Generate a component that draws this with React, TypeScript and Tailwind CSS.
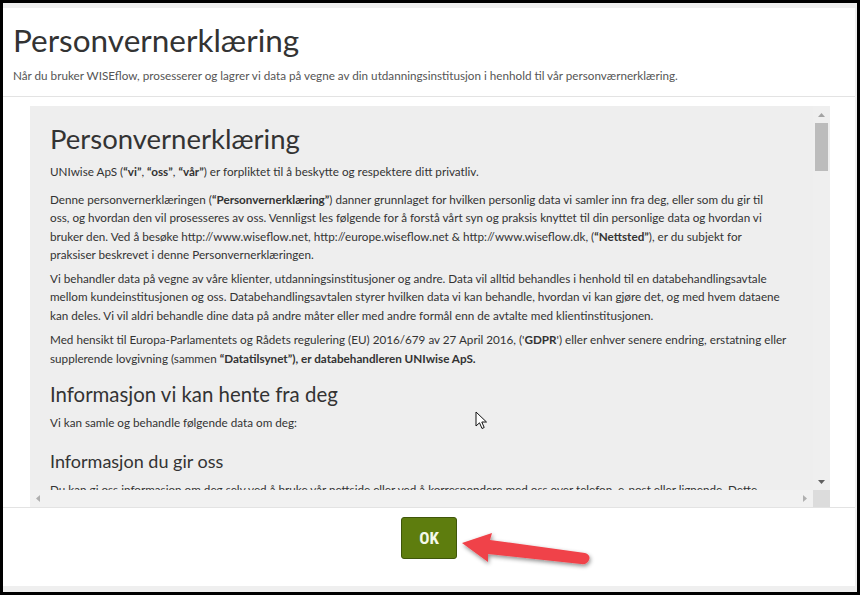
import React from "react";

const Line = ({ children }: { children: React.ReactNode }) => (
  <span className="block whitespace-nowrap">{children}</span>
);

export default function App() {
  return (
    <div className="w-[860px] h-[595px] bg-black p-[3px] font-['Lato',sans-serif] relative overflow-hidden">
      <div className="h-full bg-[#efefef] pt-[5px] pr-[2px] pb-[6px]">
        <div className="h-full bg-white flex flex-col">
          {/* Header */}
          <div className="h-[89px] border-b border-[#e3e3e3] px-[10px] pt-[15px] shrink-0">
            <h1 className="text-[31.5px] leading-[34px] text-[#333]">Personvernerklæring</h1>
            <p className="text-[11.7px] leading-[16px] text-[#555] mt-[10px]">
              Når du bruker WISEflow, prosesserer og lagrer vi data på vegne av din utdanningsinstitusjon i henhold til vår personværnerklæring.
            </p>
          </div>
          {/* Body */}
          <div className="pl-[27px] pr-[25px] pt-[9px] shrink-0">
            <div className="h-[401px] w-[800px] bg-[#eeeeee] flex flex-col">
              <div className="flex flex-1 min-h-0">
                <div className="flex-1 overflow-hidden px-[20px] pt-[17px] text-[#333] relative">
                  <h2 className="text-[27.5px] leading-[32px] mb-[7px]">Personvernerklæring</h2>
                  <div className="text-[11.7px] leading-[18.5px]">
                    <p className="mb-[9px]">
                      <Line>
                        UNIwise ApS (<b>“vi”</b>, <b>“oss”</b>, <b>“vår”</b>) er forpliktet til å beskytte og respektere ditt privatliv.
                      </Line>
                    </p>
                    <p className="mb-[5px]">
                      <Line>
                        Denne personvernerklæringen (<b>“Personvernerklæring”</b>) danner grunnlaget for hvilken personlig data vi samler inn fra deg, eller som du gir til
                      </Line>
                      <Line>
                        oss, og hvordan den vil prosesseres av oss. Vennligst les følgende for å forstå vårt syn og praksis knyttet til din personlige data og hvordan vi
                      </Line>
                      <Line>
                        bruker den. Ved å besøke http://www.wiseflow.net, http://europe.wiseflow.net &amp; http://www.wiseflow.dk, (<b>“Nettsted”</b>), er du subjekt for
                      </Line>
                      <Line>praksiser beskrevet i denne Personvernerklæringen.</Line>
                    </p>
                    <p className="mb-[6px]">
                      <Line>
                        Vi behandler data på vegne av våre klienter, utdanningsinstitusjoner og andre. Data vil alltid behandles i henhold til en databehandlingsavtale
                      </Line>
                      <Line>
                        mellom kundeinstitusjonen og oss. Databehandlingsavtalen styrer hvilken data vi kan behandle, hvordan vi kan gjøre det, og med hvem dataene
                      </Line>
                      <Line>
                        kan deles. Vi vil aldri behandle dine data på andre måter eller med andre formål enn de avtalte med klientinstitusjonen.
                      </Line>
                    </p>
                    <p className="mb-[9px]">
                      <Line>
                        Med hensikt til Europa-Parlamentets og Rådets regulering (EU) 2016/679 av 27 April 2016, ('<b>GDPR</b>') eller enhver senere endring, erstatning eller
                      </Line>
                      <Line>
                        supplerende lovgivning (sammen <b>“Datatilsynet”), er databehandleren UNIwise ApS.</b>
                      </Line>
                    </p>
                  </div>
                  <h3 className="text-[20.4px] leading-[26px] mt-[14px] mb-[6px]">Informasjon vi kan hente fra deg</h3>
                  <p className="text-[11.7px] leading-[18.5px] mb-[9px]">Vi kan samle og behandle følgende data om deg:</p>
                  <h3 className="text-[18px] leading-[26px] mt-[16px] mb-[6px]">Informasjon du gir oss</h3>
                  <p className="text-[11.7px] leading-[18.5px] whitespace-nowrap">
                    Du kan gi oss informasjon om deg selv ved å bruke vår nettside eller ved å korrespondere med oss over telefon, e-post eller lignende. Dette
                  </p>
                  {/* mouse cursor */}
                  <svg className="absolute left-[445px] top-[305px]" width="14" height="20" viewBox="0 0 14 20">
                    <path d="M1 1 L1 15 L4.5 11.8 L7 17.5 L9.2 16.5 L6.8 11 L11.5 11 Z" fill="#fff" stroke="#111" strokeWidth="1" strokeLinejoin="round" />
                  </svg>
                </div>
                {/* vertical scrollbar */}
                <div className="w-[17px] bg-[#efefef] flex flex-col items-center">
                  <div className="h-[17px] flex items-center justify-center">
                    <svg width="7" height="4" viewBox="0 0 7 4"><path d="M0 4 L3.5 0 L7 4 Z" fill="#a3a3a3" /></svg>
                  </div>
                  <div className="w-[13px] h-[48px] bg-[#bcbcbc]" />
                  <div className="flex-1" />
                  <div className="h-[17px] flex items-center justify-center">
                    <svg width="7" height="4" viewBox="0 0 7 4"><path d="M0 0 L3.5 4 L7 0 Z" fill="#606060" /></svg>
                  </div>
                </div>
              </div>
              {/* horizontal scrollbar */}
              <div className="h-[17px] flex shrink-0">
                <div className="flex-1 bg-[#f1f1f1] flex items-center justify-between px-[6px]">
                  <svg width="4" height="7" viewBox="0 0 4 7"><path d="M4 0 L0 3.5 L4 7 Z" fill="#b0b0b0" /></svg>
                  <svg width="4" height="7" viewBox="0 0 4 7"><path d="M0 0 L4 3.5 L0 7 Z" fill="#b0b0b0" /></svg>
                </div>
                <div className="w-[17px] bg-[#dcdcdc]" />
              </div>
            </div>
          </div>
          {/* Footer */}
          <div className="flex-1 border-t border-[#e3e3e3] flex justify-center pt-[9px]">
            <button className="w-[56px] h-[42px] rounded-[3px] bg-[#5e7d0e] border border-[#3f560a] text-[#f4f8ea] text-[17px] font-bold leading-none font-['Roboto_Condensed','Liberation_Sans_Narrow','Lato',sans-serif]">
              OK
            </button>
          </div>
        </div>
      </div>
      {/* red annotation arrow */}
      <svg className="absolute left-[455px] top-[522px]" width="145" height="55" viewBox="0 0 145 55">
        <defs>
          <filter id="sh" x="-20%" y="-40%" width="140%" height="180%">
            <feDropShadow dx="1" dy="2" stdDeviation="2" floodColor="#000" floodOpacity="0.45" />
          </filter>
        </defs>
        <g filter="url(#sh)">
          <path d="M7 21 L37 11 L35 18 L130 31 Q136 33 134 38 Q132 43 126 42 L33 32 L33 40 Z" fill="#f0424a" strokeLinejoin="round" />
        </g>
      </svg>
    </div>
  );
}
